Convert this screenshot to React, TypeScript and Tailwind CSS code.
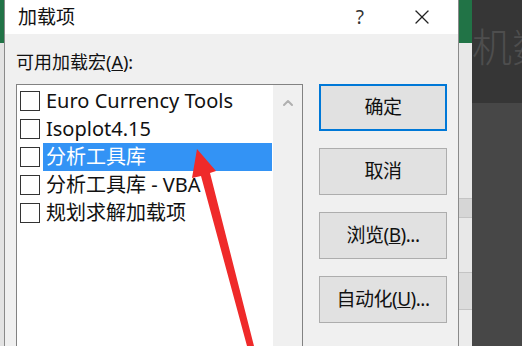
import { ChevronUp, X } from "lucide-react";

const font = { fontFamily: '"Noto Sans", "Noto Sans CJK SC", sans-serif' };

const items = [
  { label: "Euro Currency Tools", selected: false },
  { label: "Isoplot4.15", selected: false },
  { label: "分析工具库", selected: true },
  { label: "分析工具库 - VBA", selected: false },
  { label: "规划求解加载项", selected: false },
];

function DialogButton({
  children,
  primary,
}: {
  children: React.ReactNode;
  primary?: boolean;
}) {
  return (
    <button
      type="button"
      className={`flex h-[47px] w-[128px] items-center justify-center bg-[#e1e1e1] text-[19px] tracking-[-0.5px] text-[#111] ${
        primary ? "border-2 border-[#0078d7]" : "border border-[#adadad]"
      }`}
    >
      {children}
    </button>
  );
}

export default function App() {
  return (
    <div
      className="relative flex h-[346px] w-[522px] overflow-hidden bg-[#e6e6e6]"
      style={font}
    >
      {/* excel behind, left */}
      <div className="flex w-[4px] flex-col">
        <div className="h-[43px] bg-[#217346]" />
        <div className="flex-1 bg-[#e3e3e3]" />
      </div>

      {/* dialog */}
      <div className="flex w-[455px] flex-col border-x border-[#8a8a8a] bg-[#f0f0f0]">
        <div className="flex h-[34px] items-center bg-white pl-[13px] text-[19px] text-[#111]">
          <span>加载项</span>
          <span className="ml-auto mr-[46px] text-[19px] text-[#333]">?</span>
          <X size={24} strokeWidth={1.3} className="mr-[24px] text-[#222]" />
        </div>

        <div className="flex flex-1 min-h-0">
          <div className="ml-[11px] flex flex-col">
            <div className="mt-[17px] h-[22px] text-[18px] leading-[22px] text-[#111]">
              可用加载宏(<span className="underline">A</span>):
            </div>
            <div className="mt-[11px] flex h-[300px] w-[287px] border-x border-t border-[#828282] bg-white">
              <div className="flex w-[256px] flex-col pt-[2px]">
                {items.map((item) => (
                  <div key={item.label} className="flex h-[28px] items-center">
                    <div className="ml-[3px] size-[20px] shrink-0 border border-[#333] bg-white" />
                    <div
                      className={`ml-[3px] mr-[1px] flex h-[28px] flex-1 items-center pl-[3px] text-[20px] whitespace-nowrap ${
                        item.selected ? "bg-[#3393f5] text-white" : "text-[#111]"
                      }`}
                    >
                      {item.label}
                    </div>
                  </div>
                ))}
              </div>
              <div className="flex flex-1 justify-center bg-[#f0f0f0] pt-[10px]">
                <ChevronUp size={16} strokeWidth={3} className="text-[#b0b0b0]" />
              </div>
            </div>
          </div>

          <div className="ml-[16px] flex flex-col gap-[17px] pt-[50px]">
            <DialogButton primary>确定</DialogButton>
            <DialogButton>取消</DialogButton>
            <DialogButton>
              浏览(<span className="underline">B</span>)...
            </DialogButton>
            <DialogButton>
              自动化(<span className="underline">U</span>)...
            </DialogButton>
          </div>
        </div>
      </div>

      {/* excel behind, right */}
      <div className="flex w-[13px] flex-col">
        <div className="h-[43px] bg-[#217346]" />
        <div className="h-[155px] bg-[#e8e8e8]" />
        <div className="h-[20px] border-y border-[#c4c4c4] bg-[#d6d6d6]" />
        <div className="h-[54px] bg-[#e8e8e8]" />
        <div className="h-[38px] border-y border-[#c4c4c4] bg-[#dcdcdc]" />
        <div className="flex-1 bg-[#ececec]" />
      </div>
      <div className="flex w-[50px] flex-col">
        <div className="h-[103px] overflow-hidden bg-[#363636] pt-[22px] text-[40px] leading-[50px] font-light whitespace-nowrap text-[#4e4e4e]">
          机数
        </div>
        <div className="flex-1 bg-[#474747]" />
      </div>

      {/* red annotation arrow */}
      <svg
        className="pointer-events-none absolute top-0 left-0"
        width="522"
        height="346"
        viewBox="0 0 522 346"
      >
        <polygon
          points="197,149 216,171 210,173 254,346 247,346 201,176 192,178"
          fill="#ef2a2a"
        />
      </svg>
    </div>
  );
}
